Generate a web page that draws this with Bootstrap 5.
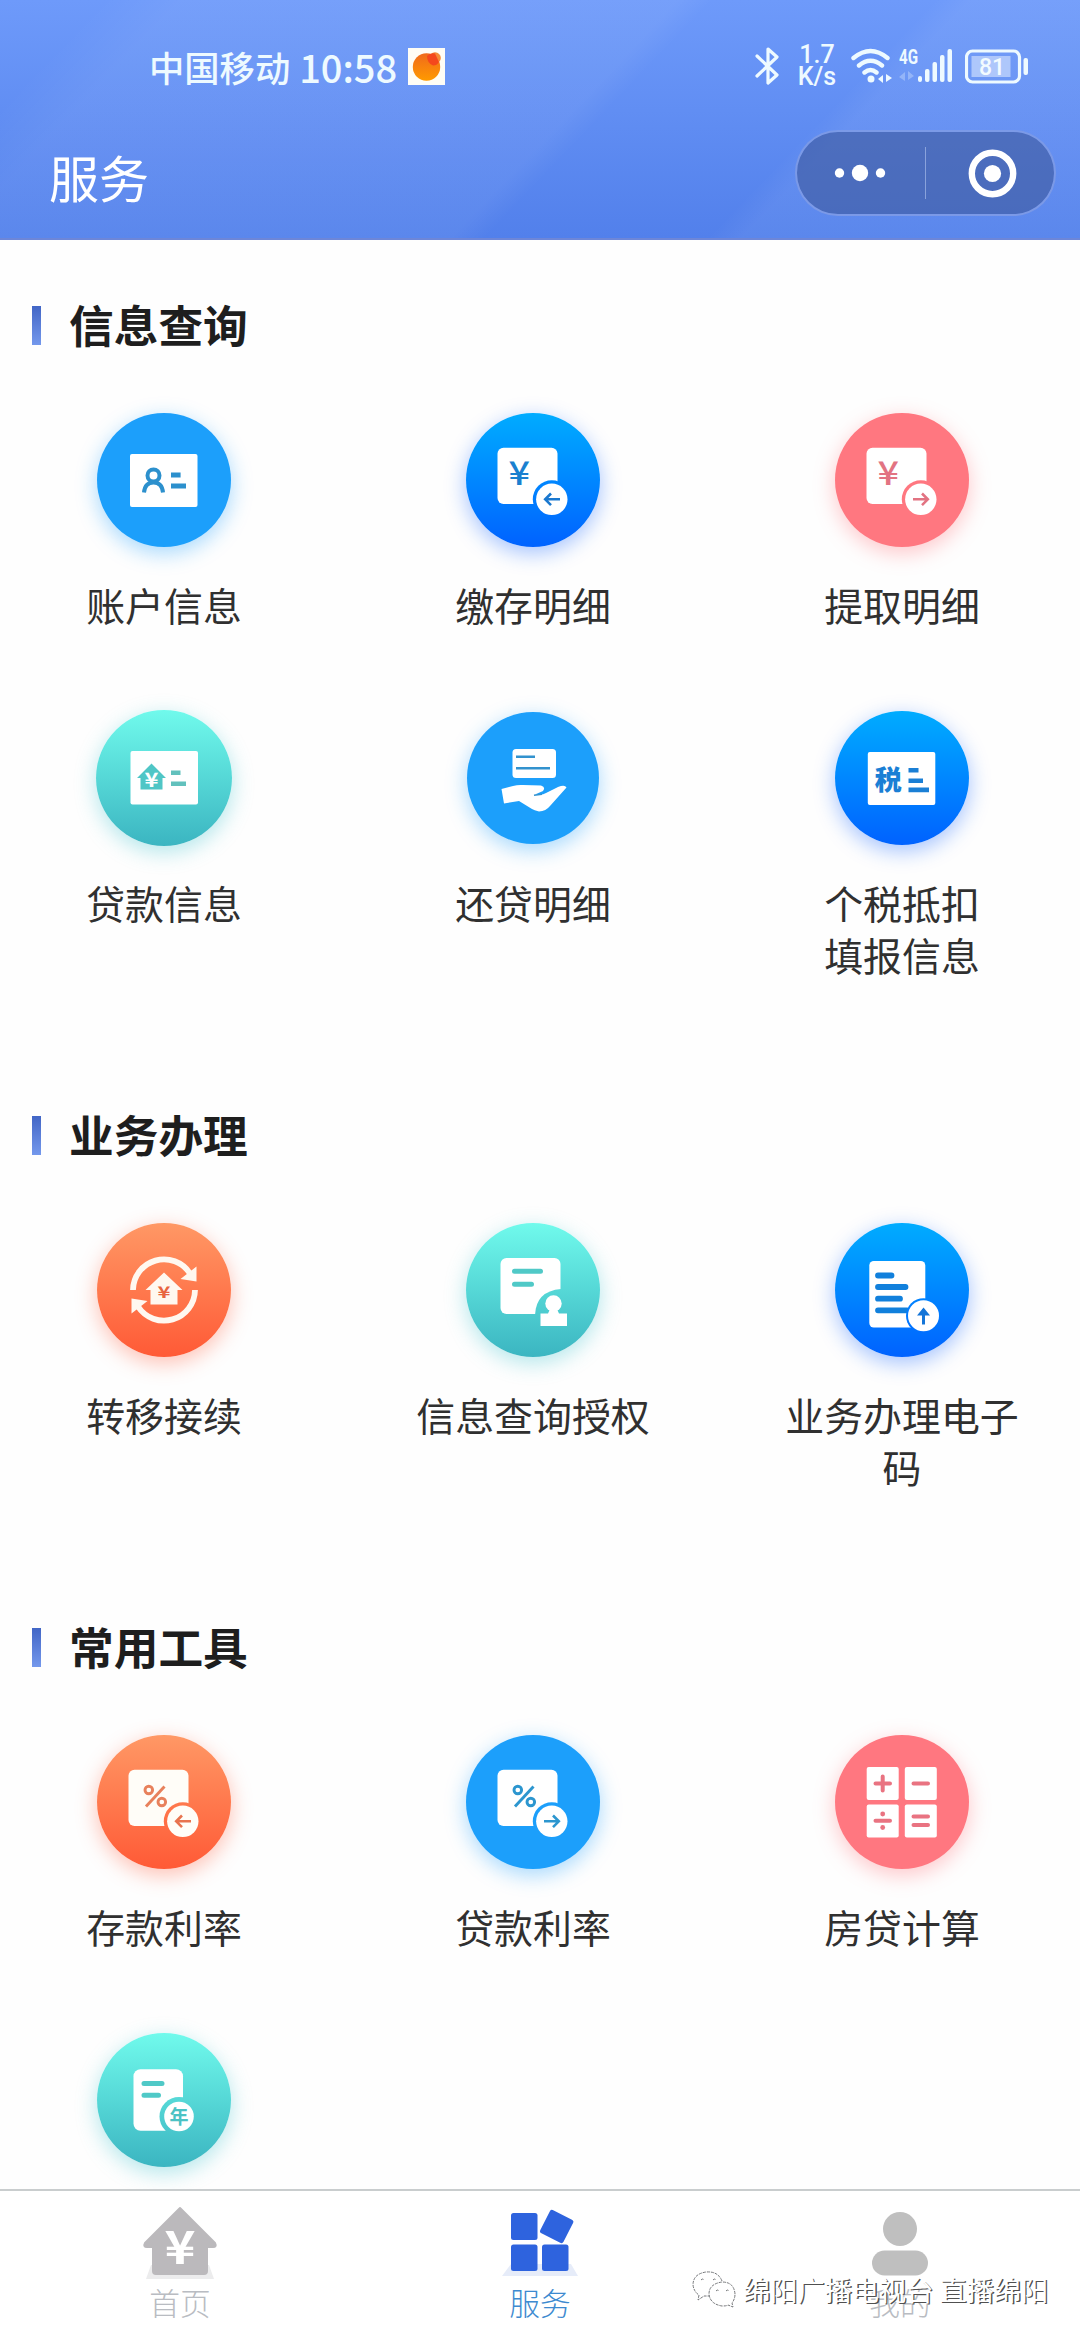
<!DOCTYPE html>
<html lang="zh-CN">
<head>
<meta charset="utf-8">
<meta name="viewport" content="width=device-width, initial-scale=1">
<title>服务</title>
<link href="https://cdn.jsdelivr.net/npm/bootstrap@5.3.0/dist/css/bootstrap.min.css" rel="stylesheet">
<style>
body{font-family:"Noto Sans CJK SC",sans-serif;height:2340px;color:#333;background:#fefefe}
.app-head{height:240px;background:linear-gradient(133.8deg,rgba(255,255,255,0) 75px,rgba(255,255,255,.055) 130px,rgba(255,255,255,.055) 490px,rgba(255,255,255,0) 515px,rgba(255,255,255,0) 675px,rgba(255,255,255,.055) 700px),linear-gradient(#6e9afa,#5280eb);border-bottom:2px solid #6d86d8}
.status-bar{height:96px;padding:40px 50px 0 149px;color:#eefaff}
.carrier{font-size:35.3px;line-height:54px;font-weight:500}
.clock{font-size:38px;line-height:53px;margin-left:9px;font-weight:500}
.app-mark{margin:8px 0 0 11px}
.rate{width:42px;font-size:25px;line-height:22px;font-weight:500;font-family:Roboto,sans-serif;margin:4px 13px 0 17px}
.rate span{display:block;height:22px}
.title-bar{height:144px;padding:0 24px 0 49px}
.page-title{font-size:50px;line-height:60px;font-weight:400;margin-top:50px}
.capsule{width:261px;height:86px;margin-top:34px;background:rgba(62,88,158,.62);border:2px solid rgba(140,170,245,.75)}
.capsule .sep{width:1.5px;height:52px;background:rgba(200,215,250,.5)}
.sec-head{height:39px;margin:0 0 68px 32px;gap:28px}
.sec-bar{width:9px;height:39px;background:linear-gradient(#4266c6,#7498ec)}
.sec-title{font-size:44.7px;line-height:60px;font-weight:700;color:#1e1e1e;padding-bottom:3px}
.svc-section{padding-top:55px}
.svc-section:first-child{padding-top:66px}
.svc-grid{display:grid;grid-template-columns:repeat(3,240px);column-gap:129px;margin-left:44px}
.svc-item{padding-bottom:81px}
.disc{width:134px;height:134px;border-radius:50%}
.disc svg,.app-head svg,.tab-bar svg{display:block;flex:none}
.disc.big{width:136px;height:136px;margin:-1px 0}
.disc.sm{width:132px;height:132px;margin:1px 0}
.svc-name{font-size:38.9px;line-height:52px;margin-top:31px;width:240px;color:#303030}
.c-sky{background:#1c9ffb;box-shadow:0 6px 20px 1px rgba(28,159,251,.36)}
.c-deep{background:linear-gradient(#00acff,#0062ff);box-shadow:0 6px 20px 1px rgba(20,100,255,.36)}
.c-pink{background:#ff7780;box-shadow:0 6px 20px 1px rgba(255,110,120,.36)}
.c-teal{background:linear-gradient(#70faec,#3bb5c1);box-shadow:0 6px 20px 1px rgba(60,195,205,.36)}
.c-orange{background:linear-gradient(#ff9865,#ff5a36);box-shadow:0 6px 20px 1px rgba(255,95,60,.36)}
.tab-bar{height:151px;border-top:2px solid #c9cdce}
.tab-item{width:120px;padding-top:14px}
.tab-text{font-size:30.8px;line-height:40px;margin-top:1px;color:#b9bcc2;font-weight:300}
.tab-text.on{color:#3d8ad0}
.tabs-row{padding:0 120px}
.wmark{position:absolute;left:691px;top:76px;color:#fff;font-size:27.2px;line-height:44px;text-shadow:1.4px 1.4px 0 #505050;white-space:nowrap;gap:6px}
</style>
</head>
<body class="d-flex flex-column overflow-hidden">
<header class="app-head flex-shrink-0">
  <div class="status-bar d-flex align-items-start">
    <span class="carrier">中国移动</span><span class="clock">10:58</span>
    <svg class="app-mark" width="37" height="37" viewBox="0 0 37 37"><defs><linearGradient id="sun" x2="0" y2="1"><stop stop-color="#f06a1c"/><stop offset="1" stop-color="#ff9a00"/></linearGradient></defs><rect width="37" height="37" fill="#fffdf5"/><circle cx="18.500" cy="19" r="13.700" fill="url(#sun)"/><circle cx="27" cy="10" r="5.800" fill="#f58a35"/><path d="M19 8Q22 4.500 27 5.500L31 14Q29 17.500 25 17.500Q19 15 19 8Z" fill="#f4481c"/></svg>
    <div class="d-flex align-items-start ms-auto">
      <svg style="margin-top:7px" width="24" height="38" viewBox="0 0 24 38" fill="none" stroke="#eefaff" stroke-width="3.200" stroke-linejoin="round" stroke-linecap="round"><path d="M2 9L22 28L13 36V2L22 10L2 29"/></svg>
      <div class="rate text-center"><span>1.7</span><span>K/s</span></div>
      <svg style="margin-top:8px" width="42" height="36" viewBox="0 0 42 36" fill="none" stroke="#eefaff" stroke-width="4.400" stroke-linecap="round"><path d="M2.500 10Q19.500-4 36.500 10M8 17.500Q19.500 8 31 17.500M13.500 24.500Q19.500 19.500 25.500 24.500"/><circle cx="20" cy="31" r="3.500" fill="#eefaff" stroke="none"/><path d="M32 27v8l-5-4zM35 26v8l6-4z" fill="#eefaff" stroke="none"/></svg>
      <svg style="margin:8px 0 0 5px" width="56" height="36" viewBox="0 0 56 36" fill="#eefaff"><text x="1" y="15.500" font-family="Roboto,sans-serif" font-weight="700" font-size="20" textLength="19" lengthAdjust="spacingAndGlyphs">4G</text><path d="M7 24v9l-6-4zM10 23v9l6-4z" opacity=".3"/><rect x="20" y="28" width="4" height="6" rx="2"/><rect x="27" y="21" width="4.500" height="13" rx="2"/><rect x="34.500" y="14" width="4.500" height="20" rx="2"/><rect x="42" y="7" width="4.500" height="27" rx="2"/><rect x="49.500" y="1" width="4.500" height="33" rx="2"/></svg>
      <svg style="margin:9px 0 0 11px" width="65" height="36" viewBox="0 0 65 36" fill="none"><rect x="1.500" y="2" width="53" height="31" rx="6" stroke="#eefaff" stroke-width="3.200"/><rect x="6.500" y="7" width="39" height="21" fill="#aec7fb"/><text x="27" y="25.500" text-anchor="middle" fill="#f2fbff" font-family="Roboto,sans-serif" font-weight="500" font-size="23">81</text><rect x="58.500" y="9" width="4.500" height="17" rx="2" fill="#eefaff"/></svg>
    </div>
  </div>
  <div class="title-bar d-flex justify-content-between align-items-start">
    <h1 class="page-title text-white mb-0">服务</h1>
    <div class="capsule rounded-pill d-flex align-items-center">
      <svg width="128" height="60" viewBox="0 0 128 60" fill="#fff"><circle cx="42.500" cy="30" r="4.700"/><circle cx="63" cy="30" r="8.200"/><circle cx="83.500" cy="30" r="4.700"/></svg>
      <div class="sep"></div>
      <svg width="128" height="60" viewBox="0 0 128 60"><circle cx="66.500" cy="30.500" r="20.700" fill="none" stroke="#fff" stroke-width="6.400"/><circle cx="66.500" cy="30.500" r="8.600" fill="#fff"/></svg>
    </div>
  </div>
</header>

<svg width="0" height="0" class="position-absolute">
  <defs>
    <mask id="cutBadge"><rect width="134" height="134" fill="#fff"/><circle cx="85.800" cy="86.300" r="19" fill="#000"/></mask>
    <mask id="cutStamp"><rect width="134" height="134" fill="#fff"/><path d="M69 100V92Q70 68 95 66V104H69Z" fill="#000"/></mask>
    <mask id="cutUp"><rect width="134" height="134" fill="#fff"/><circle cx="88.500" cy="92.700" r="17.500" fill="#000"/></mask>
    <mask id="cutYear"><rect width="134" height="134" fill="#fff"/><circle cx="82" cy="83.500" r="19.500" fill="#000"/></mask>
    <g id="sheet"><rect x="31.500" y="34.700" width="60" height="56.300" rx="6" mask="url(#cutBadge)"/><circle cx="85.800" cy="86.300" r="15.700"/></g>
    <path id="toLeft" d="M94 86.300H79.500M85 80.500l-5.800 5.800 5.800 5.800" fill="none" stroke-width="2.600"/>
    <path id="toRight" d="M78 86.300H92.500M87 80.500l5.800 5.800-5.800 5.800" fill="none" stroke-width="2.600"/>
  </defs>
</svg>

<main class="flex-grow-1 overflow-hidden" style="min-height:0">
  <section class="svc-section">
    <div class="sec-head d-flex align-items-center"><span class="sec-bar"></span><h2 class="sec-title mb-0">信息查询</h2></div>
    <div class="svc-grid">
      <div class="svc-item d-flex flex-column align-items-center">
        <div class="disc c-sky"><svg viewBox="0 0 134 134"><rect x="33" y="41" width="67.500" height="53" rx="2" fill="#fff"/><g fill="none" stroke="#2c90cd" stroke-width="4"><circle cx="56.500" cy="62.500" r="6"/><path d="M47 79.500Q48 69.500 56.500 69.500T66 79.500"/></g><path d="M74 59.500h9.600v5H74zM74 70.500h15v5H74z" fill="#2c90cd"/></svg></div>
        <div class="svc-name text-center">账户信息</div>
      </div>
      <div class="svc-item d-flex flex-column align-items-center">
        <div class="disc c-deep"><svg viewBox="0 0 134 134"><use href="#sheet" fill="#fff"/><text x="42.500" y="72" textLength="21.500" lengthAdjust="spacingAndGlyphs" font-size="33" font-weight="500" fill="#1a80cf">¥</text><use href="#toLeft" stroke="#1a78cf"/></svg></div>
        <div class="svc-name text-center">缴存明细</div>
      </div>
      <div class="svc-item d-flex flex-column align-items-center">
        <div class="disc c-pink"><svg viewBox="0 0 134 134"><use href="#sheet" fill="#fff"/><text x="42.500" y="72" textLength="21.500" lengthAdjust="spacingAndGlyphs" font-size="33" font-weight="500" fill="#e27382">¥</text><use href="#toRight" stroke="#e27382"/></svg></div>
        <div class="svc-name text-center">提取明细</div>
      </div>
      <div class="svc-item d-flex flex-column align-items-center">
        <div class="disc big c-teal"><svg viewBox="0 0 136 136"><rect x="34.500" y="41" width="67.500" height="53.500" rx="2" fill="#fff"/><path d="M55.500 53.500L70 68h-3.500v11.500h-22V68H41z" fill="#4fc6c6"/><text x="48.500" y="76.500" textLength="14" lengthAdjust="spacingAndGlyphs" font-size="20" font-weight="700" fill="#fff">¥</text><path d="M75 60.500h9.500v4.500H75zM75 71.500h15v4.500H75z" fill="#62c1bd"/></svg></div>
        <div class="svc-name text-center">贷款信息</div>
      </div>
      <div class="svc-item d-flex flex-column align-items-center">
        <div class="disc sm c-sky"><svg viewBox="0 0 132 132"><rect x="45.500" y="37" width="43.500" height="29" rx="3.500" fill="#fff"/><path d="M49 44.700h19M49 56.300h34" stroke="#3292ce" stroke-width="2.600"/><path d="M34.500 77L46 74Q51 72.500 56 73L74 73.500Q79 75 76 79L68 82.500Q76 83.500 79 81L91 75Q98 72.500 99.500 75.500L83 94Q79 99 72 99.500Q67 98 65 97L52 89L37 91.500Z" fill="#fff"/><path d="M67 83.200L75 82.300" stroke="#3292ce" stroke-width="1.500"/></svg></div>
        <div class="svc-name text-center">还贷明细</div>
      </div>
      <div class="svc-item d-flex flex-column align-items-center">
        <div class="disc c-deep"><svg viewBox="0 0 134 134"><rect x="32.800" y="41" width="67.500" height="53" rx="2" fill="#fff"/><text x="53.200" y="78.500" text-anchor="middle" font-size="27" font-weight="900" fill="#1a7fd5">税</text><path d="M73.500 57h10v4.500h-10zM73.500 67.500h14.500v4.500H73.500zM73.500 76.500h20.500v4.800H73.500z" fill="#1a7fd5"/></svg></div>
        <div class="svc-name text-center">个税抵扣<br>填报信息</div>
      </div>
    </div>
  </section>

  <section class="svc-section">
    <div class="sec-head d-flex align-items-center"><span class="sec-bar"></span><h2 class="sec-title mb-0">业务办理</h2></div>
    <div class="svc-grid">
      <div class="svc-item d-flex flex-column align-items-center">
        <div class="disc c-orange"><svg viewBox="0 0 134 134"><g fill="none" stroke="#fff8f0" stroke-width="5.800"><path d="M36 67A31 31 0 0 1 93 50.500"/><path d="M98 67A31 31 0 0 1 41 83.500"/></g><path d="M99.500 43.500V58.500L83.500 56ZM34.500 90.500V75.500L50.500 78Z" fill="#fff8f0"/><path d="M67 49.500L85.500 67H80.500V81.500H53.500V67H48.500Z" fill="#fff8f0"/><text x="60.500" y="75" textLength="13" lengthAdjust="spacingAndGlyphs" font-size="16" font-weight="700" fill="#e8643f">¥</text></svg></div>
        <div class="svc-name text-center">转移接续</div>
      </div>
      <div class="svc-item d-flex flex-column align-items-center">
        <div class="disc c-teal"><svg viewBox="0 0 134 134"><rect x="34.500" y="35" width="60" height="56" rx="6" fill="#fff" mask="url(#cutStamp)"/><path d="M48.500 48.300H74.500M48.500 61.300H65.500" stroke="#50c9c7" stroke-width="5" stroke-linecap="round"/><g fill="#fff"><circle cx="87.500" cy="80.500" r="8.200"/><path d="M84.500 85h6l2.500 5.500h8v12.500H74.500V90.500h7.500z"/></g></svg></div>
        <div class="svc-name text-center">信息查询授权</div>
      </div>
      <div class="svc-item d-flex flex-column align-items-center">
        <div class="disc c-deep"><svg viewBox="0 0 134 134"><g mask="url(#cutUp)"><rect x="34.300" y="38" width="56" height="66.500" rx="4.500" fill="#fff"/><path d="M43 52.500H56.500M43 64H70.500M43 75.700H65M43 87.300H72" stroke="#1180dc" stroke-width="5.800" stroke-linecap="round"/></g><circle cx="88.500" cy="92.700" r="15.500" fill="#fff"/><path d="M88.500 86V101.500" stroke="#1475d8" stroke-width="3"/><path d="M88.500 84.500l6.500 8h-13z" fill="#1475d8"/></svg></div>
        <div class="svc-name text-center">业务办理电子码</div>
      </div>
    </div>
  </section>

  <section class="svc-section">
    <div class="sec-head d-flex align-items-center"><span class="sec-bar"></span><h2 class="sec-title mb-0">常用工具</h2></div>
    <div class="svc-grid">
      <div class="svc-item d-flex flex-column align-items-center">
        <div class="disc c-orange"><svg viewBox="0 0 134 134"><use href="#sheet" fill="#fffdf8"/><g fill="none" stroke="#e8815c" stroke-width="2.900"><circle cx="51.800" cy="55" r="3.800"/><circle cx="64.800" cy="67" r="3.800"/><path d="M67.500 51.500L49 71.500"/></g><use href="#toLeft" stroke="#e8734f"/></svg></div>
        <div class="svc-name text-center">存款利率</div>
      </div>
      <div class="svc-item d-flex flex-column align-items-center">
        <div class="disc c-sky"><svg viewBox="0 0 134 134"><use href="#sheet" fill="#fff"/><g fill="none" stroke="#2c96cf" stroke-width="2.900"><circle cx="51.800" cy="55" r="3.800"/><circle cx="64.800" cy="67" r="3.800"/><path d="M67.500 51.500L49 71.500"/></g><use href="#toRight" stroke="#2c96cf"/></svg></div>
        <div class="svc-name text-center">贷款利率</div>
      </div>
      <div class="svc-item d-flex flex-column align-items-center">
        <div class="disc c-pink"><svg viewBox="0 0 134 134"><g fill="#fff"><rect x="31.700" y="32" width="32" height="33" rx="2"/><rect x="69.800" y="32" width="32" height="33" rx="2"/><rect x="31.700" y="69.500" width="32" height="33" rx="2"/><rect x="69.800" y="69.500" width="32" height="33" rx="2"/></g><path d="M40.500 48.500H55M47.700 41.500V55.500M78.500 48.500H93M40.500 85.800H55M78.500 81.500H93M78.500 90H93" stroke="#e97381" stroke-width="4" stroke-linecap="round"/><circle cx="47.700" cy="79" r="2.400" fill="#e97381"/><circle cx="47.700" cy="92.500" r="2.400" fill="#e97381"/></svg></div>
        <div class="svc-name text-center">房贷计算</div>
      </div>
      <div class="svc-item d-flex flex-column align-items-center">
        <div class="disc c-teal"><svg viewBox="0 0 134 134"><rect x="36.500" y="36.300" width="49.500" height="61.500" rx="7" fill="#fff" mask="url(#cutYear)"/><path d="M47 50.500H65M47 62.200H61.500" stroke="#50c9c7" stroke-width="5" stroke-linecap="round"/><circle cx="82" cy="83.500" r="14.800" fill="#fff"/><text x="82" y="90.500" text-anchor="middle" font-size="19" font-weight="700" fill="#4bc2c4">年</text></svg></div>
      </div>
    </div>
  </section>
</main>

<nav class="tab-bar position-relative flex-shrink-0 bg-white">
  <div class="tabs-row d-flex justify-content-between">
    <div class="tab-item d-flex flex-column align-items-center">
      <svg width="76" height="76" viewBox="0 0 76 76"><path d="M9 60H67L72 74H4Z" fill="#ececed"/><path d="M38 3L73 38Q75 42 71 42H65V66Q65 69 62 69H14Q11 69 11 66V42H5Q1 42 3 38Z" fill="#bbb9bc" stroke="#bbb9bc" stroke-width="2" stroke-linejoin="round"/><text x="22.500" y="59" textLength="31" lengthAdjust="spacingAndGlyphs" font-size="46" font-weight="700" fill="#fff">¥</text></svg>
      <div class="tab-text">首页</div>
    </div>
    <div class="tab-item d-flex flex-column align-items-center">
      <svg width="76" height="76" viewBox="0 0 76 76"><path d="M9 59H69L76 71H0Z" fill="#e6ecf9"/><g fill="#2e63de"><rect x="9" y="8" width="26.500" height="27" rx="2.500"/><rect x="9" y="39.500" width="26.500" height="26.500" rx="2.500"/><rect x="40" y="39.500" width="26.500" height="26.500" rx="2.500"/><rect x="41.700" y="8.500" width="26" height="26" rx="2.500" transform="rotate(27 54.700 21.500)"/></g></svg>
      <div class="tab-text on">服务</div>
    </div>
    <div class="tab-item d-flex flex-column align-items-center">
      <svg width="76" height="76" viewBox="0 0 76 76" fill="#bfbfbf"><circle cx="38" cy="24" r="17"/><rect x="10" y="45.500" width="56" height="25" rx="12.500"/></svg>
      <div class="tab-text">我的</div>
    </div>
  </div>
  <div class="wmark d-flex align-items-center">
    <svg width="46" height="40" viewBox="0 0 46 40" fill="#fff" stroke="#77797c" stroke-width="1" stroke-dasharray="3 1"><path d="M31 12Q27 2 15 3Q2 5 2 16Q3 23 8 26L7 31L13 27H19"/><path d="M44 25Q43 13 31 13Q18 15 18 25Q19 35 31 37Q36 37 37 36L42 38L41 34Q44 30 44 25Z"/><path d="M10 11q1.500-2 3 0M22 11q1.500-2 3 0M25 22q1.500-2 3 0M35 22q1.500-2 3 0" fill="none"/></svg>
    <span>绵阳广播电视台 直播绵阳</span>
  </div>
</nav>
<script src="https://cdn.jsdelivr.net/npm/bootstrap@5.3.0/dist/js/bootstrap.bundle.min.js"></script>
</body>
</html>
